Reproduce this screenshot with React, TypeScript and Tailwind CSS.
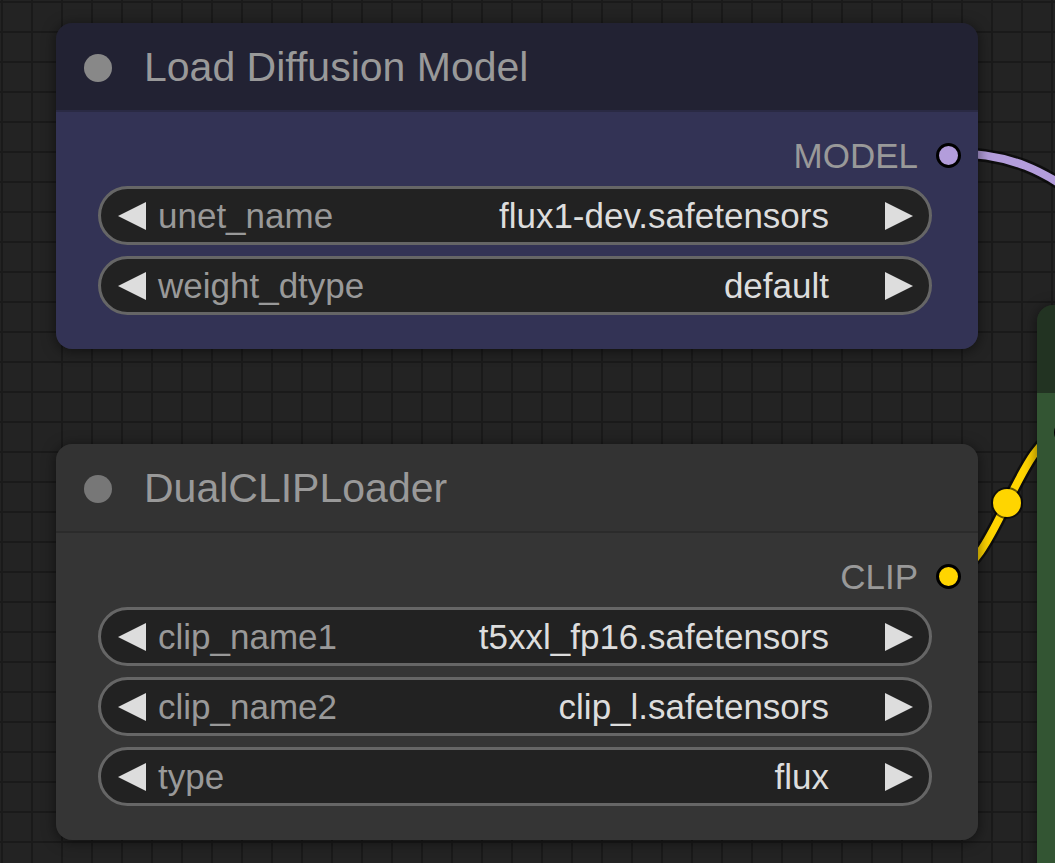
import React from "react";

type Widget = { label: string; value: string };

type NodeProps = {
  title: string;
  output: string;
  slotColor: string;
  headerClass: string;
  bodyClass: string;
  dotClass: string;
  widgets: Widget[];
  className: string;
};

function Arrow({ dir }: { dir: "left" | "right" }) {
  return (
    <svg width="28" height="28" viewBox="0 0 28 28" className="shrink-0">
      {dir === "left" ? <polygon points="28,0 28,28 0,14" fill="#dddddd" /> : <polygon points="0,0 0,28 28,14" fill="#dddddd" />}
    </svg>
  );
}

function ComboWidget({ label, value }: Widget) {
  return (
    <div className="flex h-[59px] w-[834px] items-center rounded-full border-[3px] border-[#666] bg-[#222] pl-[17px] pr-[16px] text-[35px] leading-none">
      <Arrow dir="left" />
      <span className="ml-[12px] text-[#999]">{label}</span>
      <span className="ml-auto mr-[56px] text-[#ddd]">{value}</span>
      <Arrow dir="right" />
    </div>
  );
}

function GraphNode({ title, output, slotColor, headerClass, bodyClass, dotClass, widgets, className }: NodeProps) {
  return (
    <div className={`absolute left-[56px] w-[922px] overflow-hidden rounded-[16px] shadow-[0_2px_14px_rgba(0,0,0,0.55)] ${className}`}>
      <div className={`flex h-[89px] items-center pl-[28px] pt-[2px] ${headerClass}`}>
        <div className={`h-[28px] w-[28px] rounded-full ${dotClass}`} />
        <span className="ml-[32px] text-[41px] leading-none text-[#999]">{title}</span>
      </div>
      <div className={`flex flex-col pb-[34px] pl-[42px] pt-[15px] ${bodyClass}`}>
        <div className="flex h-[56px] items-center justify-end pr-[17px]">
          <span className="text-[35px] leading-none text-[#999]">{output}</span>
          <div className="ml-[18px] h-[25px] w-[25px] rounded-full border-[3px] border-black" style={{ backgroundColor: slotColor }} />
        </div>
        <div className="mt-[3px] flex flex-col gap-[11px]">
          {widgets.map((w) => (
            <ComboWidget key={w.label} label={w.label} value={w.value} />
          ))}
        </div>
      </div>
    </div>
  );
}

export default function App() {
  return (
    <div
      className="relative h-[863px] w-[1055px] overflow-hidden bg-[#232323] bg-[linear-gradient(to_right,#1a1a1a_2px,transparent_2px),linear-gradient(to_bottom,#1a1a1a_2px,transparent_2px)] bg-[size:30px_30px] bg-[position:1px_1px]"
      style={{ fontFamily: '"Liberation Sans", Arial, sans-serif' }}
    >
      {/* links sit under the nodes */}
      <svg className="absolute inset-0" width="1055" height="863">
        <path d="M949 153 C 1010 153, 1045 170, 1090 205" fill="none" stroke="rgba(0,0,0,0.6)" strokeWidth="13" />
        <path d="M949 153 C 1010 153, 1045 170, 1090 205" fill="none" stroke="#b39ddb" strokeWidth="8" />
        <path d="M949 574 C 995 574, 1019 432, 1065 432" fill="none" stroke="rgba(0,0,0,0.6)" strokeWidth="13" />
        <path d="M949 574 C 995 574, 1019 432, 1065 432" fill="none" stroke="#ffd500" strokeWidth="8" />
        <circle cx="1007" cy="503" r="16" fill="rgba(0,0,0,0.6)" />
        <circle cx="1007" cy="503" r="14" fill="#ffd500" />
      </svg>

      {/* conditioning node peeking in from the right */}
      <div className="absolute left-[1037px] top-[305px] h-[600px] w-[120px] overflow-hidden rounded-tl-[16px] shadow-[0_2px_14px_rgba(0,0,0,0.55)]">
        <div className="h-[88px] bg-[#223322]" />
        <div className="relative h-full bg-[#335533]">
          <div className="absolute left-[17px] top-[27px] h-[25px] w-[25px] rounded-full border-[3px] border-black bg-[#ffd500]" />
        </div>
      </div>

      <GraphNode
        className="top-[23px]"
        title="Load Diffusion Model"
        output="MODEL"
        slotColor="#b39ddb"
        headerClass="bg-[#222233] border-b-2 border-[#2a2a44]"
        bodyClass="bg-[#333355]"
        dotClass="bg-[#888]"
        widgets={[
          { label: "unet_name", value: "flux1-dev.safetensors" },
          { label: "weight_dtype", value: "default" },
        ]}
      />

      <GraphNode
        className="top-[444px]"
        title="DualCLIPLoader"
        output="CLIP"
        slotColor="#ffd500"
        headerClass="bg-[#333333] border-b-2 border-[#2b2b2b]"
        bodyClass="bg-[#353535]"
        dotClass="bg-[#777]"
        widgets={[
          { label: "clip_name1", value: "t5xxl_fp16.safetensors" },
          { label: "clip_name2", value: "clip_l.safetensors" },
          { label: "type", value: "flux" },
        ]}
      />
    </div>
  );
}
